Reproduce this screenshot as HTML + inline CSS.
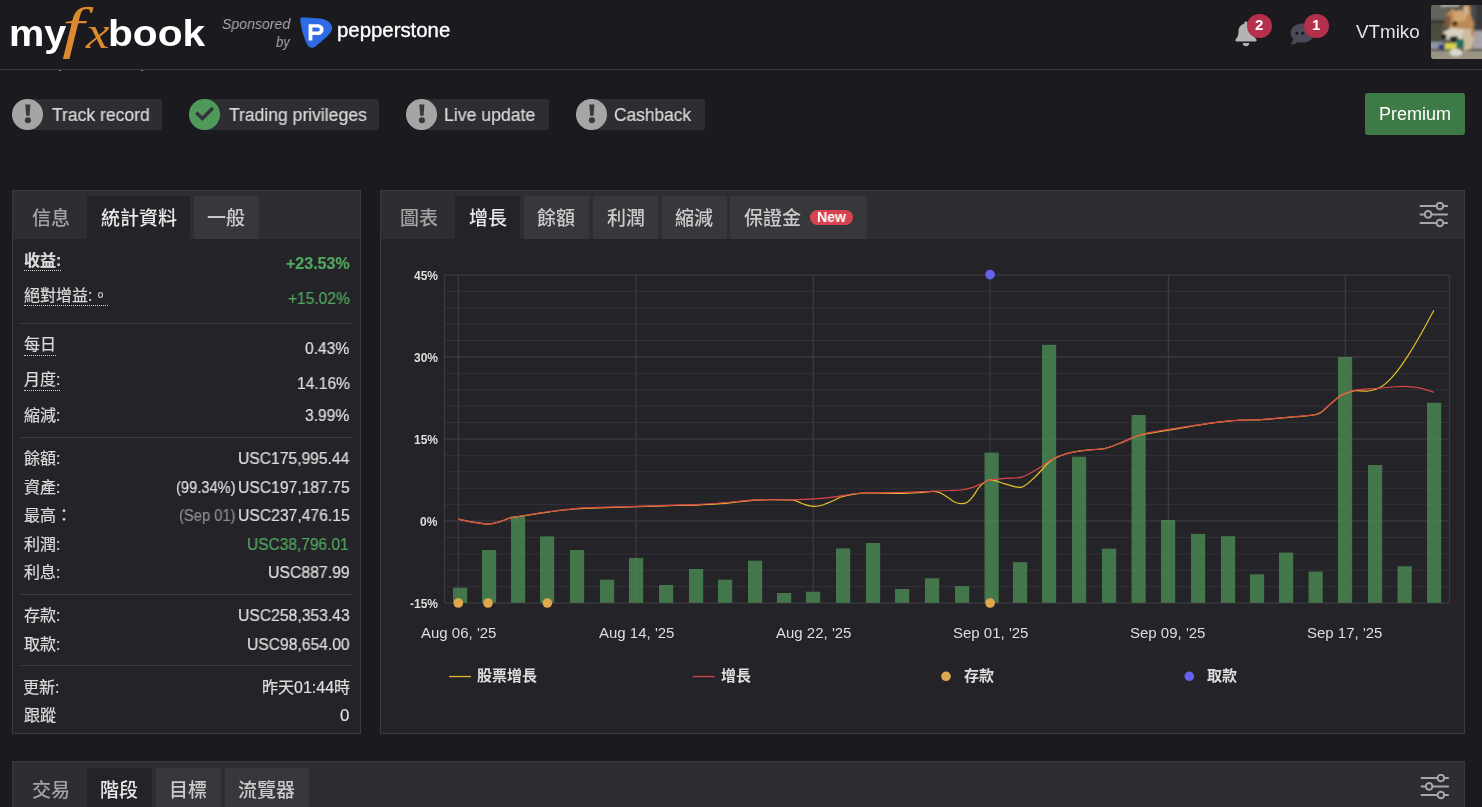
<!DOCTYPE html>
<html lang="zh-Hant"><head><meta charset="utf-8"><title>Myfxbook</title>
<style>
*{box-sizing:border-box;margin:0;padding:0}
html,body{width:1482px;height:807px;overflow:hidden;background:#1b1a1f}
body{position:relative;font-family:"Liberation Sans","Noto Sans CJK TC",sans-serif;color:#d6d6d6}
.abs,.t,.chip,.panel,.tab,.hd,.sep{position:absolute}
.t{white-space:nowrap;transform-origin:0 50%;will-change:transform}
.stats .t,.status-chips .t{-webkit-text-stroke:0.22px currentColor}
.serif{font-family:"Liberation Serif","Noto Serif CJK SC",serif}
.u::after{content:"";position:absolute;left:0;right:0;top:var(--u);border-bottom:1px dotted #cfcfcf}
header{position:absolute;left:0;top:0;width:1482px;height:70px;border-bottom:1.5px solid #3a3a46;background:#1b1a1f}
.chip{top:99px;height:31px;background:#2e2d32;border-radius:16px 3px 3px 16px}
.chip svg{display:block}
.panel{background:#242328;border:1px solid #3a393f}
.hd{left:0;top:0;right:0;height:48px;background:#2e2d32}
.tab{top:5px;height:43px;background:#38373c}
.tab.on{background:#242328}
.sep{left:20px;width:333px;height:1px;background:#3d3c42}
.chart{position:absolute;left:0;top:0}
</style></head><body>
<header></header>
<div class="abs" style="left:59px;top:70px;width:2px;height:1px;background:#8c8c90"></div><div class="abs" style="left:141px;top:70px;width:2px;height:1px;background:#8c8c90"></div>
<svg class="abs" style="left:298px;top:16px" width="36" height="33" viewBox="0 0 36 33"><path d="M2.2 3.6C2 2.2 3 1.2 4.4 1.3L22 2.6c7.6.6 12.6 5.6 12.1 9.8-.3 2.6-2.2 5.6-5.6 8.6l-11 9.6c-2.6 2.2-6.6 1.4-8.2-1.8C5.6 21.600 3 11.600 2.200 3.600z" fill="#2e6be4"/><path d="M10.6 8.2h9.600a5.400 5.400 0 0 1 0 10.800h-5.800v5.400h-3.800z M14.400 11.600v4h5.400a2 2 0 0 0 0-4z" fill="#fff" fill-rule="evenodd"/></svg>
<svg class="abs" style="left:1234px;top:20px" width="24" height="27" viewBox="0 0 24 27"><path d="M12 1.400c1 0 1.700.7 1.700 1.700v.6c3.600.8 5.800 3.800 5.800 7.600 0 4.400 1.200 6.400 2.800 8 .8.800.3 2.200-.9 2.200H2.600c-1.200 0-1.700-1.400-.9-2.200 1.600-1.600 2.800-3.600 2.800-8 0-3.800 2.200-6.800 5.800-7.600v-.6c0-1 .7-1.700 1.700-1.700z" fill="#b4b4b4"/><path d="M8.800 23h6.400a3.200 3.200 0 0 1-6.400 0z" fill="#b4b4b4"/></svg>
<svg class="abs" style="left:1289px;top:22px" width="28" height="25" viewBox="0 0 28 25"><path d="M13.4 1.600C6.800 1.600 1.700 5.700 1.700 10.900c0 2.300 1 4.400 2.700 6-.500 2-1.500 3.800-2.400 4.900-.300.400 0 .900.500.800 2.600-.300 4.900-1.400 6.500-2.600 1.400.400 2.900.600 4.400.600 6.600 0 11.700-4.300 11.700-9.700S20 1.600 13.400 1.600z" fill="#4a4a59"/><g fill="#1b1a1f"><circle cx="7.900" cy="11.300" r="1.500"/><circle cx="13.700" cy="11.300" r="1.500"/><circle cx="19.500" cy="11.300" r="1.500"/></g></svg>
<div class="abs" style="left:1247.4px;top:13.800px;width:24.400px;height:24.400px;border-radius:50%;background:#b4304c"></div>
<div class="abs" style="left:1304.2px;top:13.800px;width:24.400px;height:24.400px;border-radius:50%;background:#b4304c"></div>
<svg class="abs" style="left:1431px;top:5px" width="51" height="54" viewBox="0 0 51 54"><defs><clipPath id="av"><rect x="0" y="0" width="56" height="54" rx="3"/></clipPath><filter id="bl" x="-20%" y="-20%" width="140%" height="140%"><feGaussianBlur stdDeviation="1.300"/></filter></defs><g clip-path="url(#av)"><rect width="51" height="54" fill="#5a574e"/><g filter="url(#bl)"><rect x="-2" y="-2" width="18" height="18" fill="#66645d"/><rect x="10" y="-2" width="18" height="4" fill="#aaa7a3"/><rect x="-2" y="15" width="16" height="3" fill="#35352e"/><rect x="-2" y="18" width="13" height="20" fill="#4d4c3f"/><rect x="44" y="-2" width="9" height="26" fill="#38383b"/><rect x="40" y="-2" width="5" height="24" fill="#4c4b4b"/><rect x="42" y="26" width="11" height="18" fill="#a5a3a7"/><rect x="-2" y="46" width="56" height="10" fill="#9a9482"/><rect x="-2" y="37" width="14" height="7" fill="#8f95a9"/><path d="M16 9l5-6 4 4 7-3 2-5 5 2 1 10 3 8-2 8-6 4-14-4-6-8z" fill="#bd8a57"/><path d="M22 6l8-1 6 5-2 6-10 1z" fill="#d3a573"/><path d="M32.500 1l4 0 1.500 8-4 1z" fill="#d2b594"/><path d="M12 27l8-4 14 1 4 4-6 6-16 1z" fill="#d9d2c3"/><path d="M33 24l8 0 2 8-2 12-8 2-3-10z" fill="#cdbb9b"/><path d="M40 22l3 2 0 8-3-2z" fill="#c08a5a"/><path d="M15 12l4-2 1 8-3 6-3-4z" fill="#7d5a3a"/><path d="M21 17l5-1 1 4-5 1z" fill="#5a3d28"/><circle cx="23.700" cy="18.900" r="1.900" fill="#2a201b"/><circle cx="13" cy="31.500" r="2.600" fill="#171515"/><path d="M18 32l8-1 2 5-8 1z" fill="#1b2626"/><rect x="25" y="34.500" width="8" height="8.500" fill="#1f6f64"/><rect x="13.500" y="38" width="12" height="6.500" fill="#d9d14e"/><rect x="7.500" y="39.500" width="6" height="5" fill="#2b3c80"/><ellipse cx="25" cy="47.500" rx="6.500" ry="3.800" fill="#d9d8d0"/></g></g></svg>
<div class="abs" style="left:1365px;top:93px;width:100px;height:42px;border-radius:3px;background:#3d7a45"></div>
<div class="chip" style="left:12px;width:150px"><svg width="31" height="31" viewBox="0 0 31 31"><circle cx="15.5" cy="15.5" r="15.55" fill="#a5a5a5"/><path d="M13.25 5.4h5.15l-.85 11.4h-3.3z" fill="#38373d"/><circle cx="15.9" cy="21.2" r="3.05" fill="#38373d"/></svg></div>
<div class="chip" style="left:189px;width:190px"><svg width="31" height="31" viewBox="0 0 31 31"><circle cx="15.5" cy="15.5" r="15.55" fill="#4f9a5b"/><path d="M7.3 13.8L13.4 19.6L23.8 9.1" fill="none" stroke="#35343a" stroke-width="3.5"/></svg></div>
<div class="chip" style="left:406px;width:143px"><svg width="31" height="31" viewBox="0 0 31 31"><circle cx="15.5" cy="15.5" r="15.55" fill="#a5a5a5"/><path d="M13.25 5.4h5.15l-.85 11.4h-3.3z" fill="#38373d"/><circle cx="15.9" cy="21.2" r="3.05" fill="#38373d"/></svg></div>
<div class="chip" style="left:576px;width:129px"><svg width="31" height="31" viewBox="0 0 31 31"><circle cx="15.5" cy="15.5" r="15.55" fill="#a5a5a5"/><path d="M13.25 5.4h5.15l-.85 11.4h-3.3z" fill="#38373d"/><circle cx="15.9" cy="21.2" r="3.05" fill="#38373d"/></svg></div>
<section class="panel" style="left:12px;top:190px;width:349px;height:544px"><div class="hd"><div class="tab on" style="left:74px;width:103px"></div><div class="tab" style="left:181px;width:65px"></div></div></section>
<div class="sep" style="top:323px"></div>
<div class="sep" style="top:437px"></div>
<div class="sep" style="top:594px"></div>
<div class="sep" style="top:665px"></div>
<section class="panel" style="left:380px;top:190px;width:1085px;height:544px"><div class="hd"><div class="tab on" style="left:74px;width:65px"></div><div class="tab" style="left:143px;width:65px"></div><div class="tab" style="left:212px;width:65px"></div><div class="tab" style="left:281px;width:64.500px"></div><div class="tab" style="left:349px;width:137px"></div></div></section>
<div class="abs" style="left:809.800px;top:209.800px;width:43.500px;height:15px;border-radius:8px;background:#d8434f"></div>
<svg class="abs" style="left:1419px;top:201.9px" width="30" height="26" viewBox="0 0 30 26"><g stroke="#a8a8a8" stroke-width="2" fill="none"><path d="M0.8 4H17.5M24.3 4H28.8M0.8 12.4H5.7M12.5 12.4H28.8M0.8 21H17.5M24.3 21H28.8"/><circle cx="20.9" cy="4" r="3.3"/><circle cx="9.1" cy="12.4" r="3.3"/><circle cx="20.9" cy="21" r="3.3"/></g></svg>
<svg class="chart" width="1482" height="807" viewBox="0 0 1482 807">
<rect x="444.5" y="274.30" width="1005.0" height="1.3" fill="#3b3a40"/>
<rect x="444.5" y="290.80" width="1005.0" height="1.1" fill="#323137"/>
<rect x="444.5" y="307.21" width="1005.0" height="1.1" fill="#323137"/>
<rect x="444.5" y="323.61" width="1005.0" height="1.1" fill="#323137"/>
<rect x="444.5" y="340.02" width="1005.0" height="1.1" fill="#323137"/>
<rect x="444.5" y="356.32" width="1005.0" height="1.3" fill="#3b3a40"/>
<rect x="444.5" y="372.83" width="1005.0" height="1.1" fill="#323137"/>
<rect x="444.5" y="389.23" width="1005.0" height="1.1" fill="#323137"/>
<rect x="444.5" y="405.64" width="1005.0" height="1.1" fill="#323137"/>
<rect x="444.5" y="422.04" width="1005.0" height="1.1" fill="#323137"/>
<rect x="444.5" y="438.35" width="1005.0" height="1.3" fill="#3b3a40"/>
<rect x="444.5" y="454.85" width="1005.0" height="1.1" fill="#323137"/>
<rect x="444.5" y="471.26" width="1005.0" height="1.1" fill="#323137"/>
<rect x="444.5" y="487.66" width="1005.0" height="1.1" fill="#323137"/>
<rect x="444.5" y="504.07" width="1005.0" height="1.1" fill="#323137"/>
<rect x="444.5" y="520.38" width="1005.0" height="1.3" fill="#3b3a40"/>
<rect x="444.5" y="536.88" width="1005.0" height="1.1" fill="#323137"/>
<rect x="444.5" y="553.28" width="1005.0" height="1.1" fill="#323137"/>
<rect x="444.5" y="569.69" width="1005.0" height="1.1" fill="#323137"/>
<rect x="444.5" y="586.10" width="1005.0" height="1.1" fill="#323137"/>
<rect x="444.5" y="602.40" width="1005.0" height="1.3" fill="#3b3a40"/>
<rect x="443.85" y="274.9" width="1.3" height="328.1" fill="#3b3a40"/>
<rect x="457.65" y="274.9" width="1.3" height="328.1" fill="#3b3a40"/>
<rect x="635.55" y="274.9" width="1.3" height="328.1" fill="#3b3a40"/>
<rect x="812.65" y="274.9" width="1.3" height="328.1" fill="#3b3a40"/>
<rect x="989.45" y="274.9" width="1.3" height="328.1" fill="#3b3a40"/>
<rect x="1167.75" y="274.9" width="1.3" height="328.1" fill="#3b3a40"/>
<rect x="1344.65" y="274.9" width="1.3" height="328.1" fill="#3b3a40"/>
<rect x="1448.85" y="274.9" width="1.3" height="328.1" fill="#3b3a40"/>
<g fill="#4a8a53" fill-opacity="0.82">
<rect x="453.0" y="587.7" width="14.2" height="15.0"/>
<rect x="482.0" y="550.0" width="14.2" height="52.8"/>
<rect x="511.0" y="516.1" width="14.2" height="86.6"/>
<rect x="540.0" y="536.4" width="14.2" height="66.4"/>
<rect x="570.0" y="550.0" width="14.2" height="52.8"/>
<rect x="600.0" y="579.7" width="14.2" height="23.0"/>
<rect x="629.0" y="558.0" width="14.2" height="44.8"/>
<rect x="659.0" y="585.0" width="14.2" height="17.8"/>
<rect x="689.0" y="569.0" width="14.2" height="33.8"/>
<rect x="718.0" y="579.7" width="14.2" height="23.0"/>
<rect x="748.0" y="560.7" width="14.2" height="42.0"/>
<rect x="777.0" y="593.0" width="14.2" height="9.8"/>
<rect x="806.0" y="591.7" width="14.2" height="11.0"/>
<rect x="836.0" y="548.4" width="14.2" height="54.4"/>
<rect x="866.0" y="543.0" width="14.2" height="59.8"/>
<rect x="895.0" y="589.0" width="14.2" height="13.8"/>
<rect x="925.0" y="578.3" width="14.2" height="24.5"/>
<rect x="955.0" y="586.1" width="14.2" height="16.6"/>
<rect x="984.5" y="452.6" width="14.2" height="150.1"/>
<rect x="1013.0" y="562.2" width="14.2" height="40.5"/>
<rect x="1042.0" y="344.8" width="14.2" height="257.9"/>
<rect x="1072.0" y="456.7" width="14.2" height="146.1"/>
<rect x="1102.0" y="548.6" width="14.2" height="54.1"/>
<rect x="1131.5" y="415.0" width="14.2" height="187.8"/>
<rect x="1161.0" y="520.0" width="14.2" height="82.8"/>
<rect x="1191.0" y="533.9" width="14.2" height="68.9"/>
<rect x="1221.0" y="536.2" width="14.2" height="66.5"/>
<rect x="1250.0" y="574.3" width="14.2" height="28.5"/>
<rect x="1279.0" y="552.6" width="14.2" height="50.1"/>
<rect x="1308.5" y="571.6" width="14.2" height="31.1"/>
<rect x="1338.0" y="357.0" width="14.2" height="245.8"/>
<rect x="1368.0" y="465.0" width="14.2" height="137.8"/>
<rect x="1397.5" y="566.3" width="14.2" height="36.5"/>
<rect x="1427.0" y="402.8" width="14.2" height="199.9"/>
</g>
<path d="M458.3 519.2 C460.8 519.7 468.1 521.4 473.0 522.2 C477.9 523.0 483.5 524.2 488.0 524.1 C492.5 524.0 496.3 522.6 500.0 521.6 C503.7 520.6 505.0 519.3 510.0 518.2 C515.0 517.1 523.3 515.9 530.0 514.8 C536.7 513.7 542.5 512.8 550.0 511.8 C557.5 510.8 565.7 509.7 575.0 509.0 C584.3 508.3 595.8 508.0 606.0 507.6 C616.2 507.2 626.2 506.9 636.0 506.6 C645.8 506.3 654.3 506.1 665.0 505.8 C675.7 505.5 690.0 505.2 700.0 504.8 C710.0 504.4 715.7 504.2 725.0 503.4 C734.3 502.6 745.1 500.7 755.8 500.1 C766.5 499.5 782.1 499.8 789.0 500.0 C795.9 500.2 794.3 500.6 797.0 501.4 C799.7 502.2 802.2 503.8 805.0 504.6 C807.8 505.4 811.0 506.2 813.8 506.3 C816.6 506.4 819.0 506.1 822.0 505.2 C825.0 504.3 828.5 502.7 832.0 501.2 C835.5 499.7 838.8 497.6 842.8 496.4 C846.8 495.2 851.5 494.4 856.0 493.8 C860.5 493.2 862.1 493.1 869.6 493.0 C877.1 492.9 892.4 493.5 900.8 493.4 C909.2 493.3 914.8 492.9 920.0 492.6 C925.2 492.3 928.7 491.4 932.0 491.4 C935.3 491.4 937.3 491.8 940.0 492.8 C942.7 493.8 945.5 496.0 948.0 497.6 C950.5 499.2 952.8 501.2 955.0 502.2 C957.2 503.2 959.0 503.6 961.0 503.6 C963.0 503.6 965.0 503.6 967.0 502.4 C969.0 501.2 970.8 499.1 973.0 496.4 C975.2 493.7 977.2 489.1 980.0 486.4 C982.8 483.6 985.8 480.3 990.0 479.9 C994.2 479.5 999.8 482.6 1005.0 483.8 C1010.2 485.0 1016.3 488.3 1021.3 487.2 C1026.3 486.1 1030.2 481.3 1035.0 477.0 C1039.8 472.7 1045.5 464.9 1050.0 461.3 C1054.5 457.7 1057.9 456.8 1062.0 455.2 C1066.1 453.6 1069.8 452.8 1074.5 451.9 C1079.2 451.0 1085.0 450.4 1090.0 449.9 C1095.0 449.3 1099.5 449.7 1104.5 448.6 C1109.5 447.5 1115.0 445.1 1120.0 443.2 C1125.0 441.3 1130.3 438.6 1134.5 437.0 C1138.7 435.4 1139.7 435.0 1145.4 433.9 C1151.1 432.8 1159.5 431.7 1168.6 430.2 C1177.7 428.7 1189.3 426.4 1200.0 424.8 C1210.7 423.2 1222.4 421.6 1232.6 420.7 C1242.8 419.8 1251.6 420.2 1261.2 419.6 C1270.8 419.0 1282.2 417.9 1290.0 417.2 C1297.8 416.5 1303.1 416.2 1308.0 415.6 C1312.9 415.0 1315.5 415.3 1319.2 413.4 C1322.9 411.5 1327.3 406.7 1330.4 404.1 C1333.5 401.5 1335.5 399.4 1338.0 397.6 C1340.5 395.8 1342.5 394.6 1345.3 393.4 C1348.1 392.2 1351.2 391.0 1355.0 390.6 C1358.8 390.2 1363.8 391.7 1368.3 391.0 C1372.8 390.3 1377.2 389.4 1381.7 386.5 C1386.2 383.6 1390.5 379.1 1395.0 373.8 C1399.5 368.5 1404.0 361.7 1408.5 354.8 C1413.0 347.9 1417.6 339.9 1421.8 332.5 C1426.0 325.1 1431.9 313.9 1433.9 310.2" fill="none" stroke="#e6c02a" stroke-width="1.2"/>
<path d="M458.3 519.2 C460.8 519.7 468.1 521.4 473.0 522.2 C477.9 523.0 483.5 524.2 488.0 524.1 C492.5 524.0 496.3 522.6 500.0 521.6 C503.7 520.6 505.0 519.4 510.0 518.2 C515.0 517.0 523.3 515.7 530.0 514.6 C536.7 513.5 542.5 512.5 550.0 511.5 C557.5 510.5 565.7 509.3 575.0 508.6 C584.3 507.9 595.8 507.6 606.0 507.2 C616.2 506.8 626.2 506.7 636.0 506.4 C645.8 506.1 654.3 505.8 665.0 505.4 C675.7 505.0 690.0 504.8 700.0 504.3 C710.0 503.8 715.7 503.3 725.0 502.6 C734.3 501.9 745.1 500.4 755.8 499.9 C766.5 499.4 779.3 500.0 789.0 499.8 C798.7 499.6 806.1 499.4 813.8 498.9 C821.5 498.4 828.0 497.7 835.0 496.8 C842.0 495.9 850.2 494.2 856.0 493.5 C861.8 492.8 862.1 492.8 869.6 492.6 C877.1 492.4 890.4 492.7 900.8 492.5 C911.2 492.3 923.8 491.6 932.0 491.3 C940.2 491.0 945.2 490.7 950.0 490.5 C954.8 490.3 957.3 490.5 961.0 490.0 C964.7 489.5 968.8 488.5 972.0 487.6 C975.2 486.7 977.0 485.7 980.0 484.4 C983.0 483.1 985.8 481.0 990.0 480.0 C994.2 479.0 999.8 478.9 1005.0 478.4 C1010.2 477.9 1016.3 478.5 1021.3 477.2 C1026.3 475.9 1030.2 473.3 1035.0 470.5 C1039.8 467.7 1045.5 463.1 1050.0 460.5 C1054.5 457.9 1057.9 456.4 1062.0 455.0 C1066.1 453.6 1069.8 452.7 1074.5 451.8 C1079.2 450.9 1085.0 450.4 1090.0 449.8 C1095.0 449.2 1099.5 449.6 1104.5 448.5 C1109.5 447.4 1115.0 444.9 1120.0 443.0 C1125.0 441.1 1130.3 438.4 1134.5 436.8 C1138.7 435.2 1139.7 434.7 1145.4 433.5 C1151.1 432.3 1159.5 430.9 1168.6 429.4 C1177.7 427.9 1189.3 426.1 1200.0 424.6 C1210.7 423.1 1222.4 421.5 1232.6 420.6 C1242.8 419.8 1251.6 420.1 1261.2 419.5 C1270.8 418.9 1282.2 417.7 1290.0 417.0 C1297.8 416.3 1303.1 416.1 1308.0 415.5 C1312.9 414.9 1315.5 415.2 1319.2 413.3 C1322.9 411.4 1327.3 406.6 1330.4 404.0 C1333.5 401.4 1335.5 399.3 1338.0 397.5 C1340.5 395.7 1342.5 394.4 1345.3 393.2 C1348.1 392.0 1350.0 391.0 1355.0 390.2 C1360.0 389.4 1368.8 389.0 1375.0 388.5 C1381.2 388.0 1387.2 387.4 1392.0 387.0 C1396.8 386.6 1399.4 386.2 1404.0 386.3 C1408.6 386.4 1414.6 386.8 1419.6 387.8 C1424.6 388.8 1431.5 391.6 1433.9 392.3" fill="none" stroke="#d9474a" stroke-width="1.2"/>
<circle cx="458.3" cy="603" r="4.8" fill="#e0a84e"/>
<circle cx="488.0" cy="603" r="4.8" fill="#e0a84e"/>
<circle cx="547.3" cy="603" r="4.8" fill="#e0a84e"/>
<circle cx="990.1" cy="603" r="4.8" fill="#e0a84e"/>
<circle cx="990.1" cy="274.6" r="4.8" fill="#6462ee"/>
<rect x="449" y="675.9" width="22" height="1.3" fill="#dbb62c"/>
<rect x="692.6" y="675.9" width="22" height="1.3" fill="#cf4548"/>
<circle cx="946" cy="676.3" r="4.8" fill="#e0a84e"/>
<circle cx="1189.3" cy="676.3" r="4.8" fill="#6462ee"/>
</svg>
<section class="panel" style="left:12px;top:761px;width:1453px;height:80px"><div class="hd" style="height:60px"><div class="tab on" style="left:74px;top:6px;width:65px;height:60px"></div><div class="tab" style="left:143px;top:6px;width:65px;height:60px"></div><div class="tab" style="left:212px;top:6px;width:84px;height:60px"></div></div></section>
<svg class="abs" style="left:1419.5px;top:774.1px" width="30" height="26" viewBox="0 0 30 26"><g stroke="#a8a8a8" stroke-width="2" fill="none"><path d="M0.8 4H17.5M24.3 4H28.8M0.8 12.4H5.7M12.5 12.4H28.8M0.8 21H17.5M24.3 21H28.8"/><circle cx="20.9" cy="4" r="3.3"/><circle cx="9.1" cy="12.4" r="3.3"/><circle cx="20.9" cy="21" r="3.3"/></g></svg>
<div class="grp header">
<div class="t" style="left:9.20px;top:7.5px;font-size:37px;line-height:52px;color:#fff;font-weight:bold;transform:scaleX(1.0725);">my</div>
<div class="t serif" style="left:61.55px;top:-11.0px;font-size:56px;line-height:78px;color:#dd8a2e;font-style:italic;transform:scaleX(1.4297);">f</div>
<div class="t serif" style="left:86.35px;top:-1.0px;font-size:47px;line-height:66px;color:#dd8a2e;font-style:italic;transform:scaleX(1.1203);">x</div>
<div class="t" style="left:107.94px;top:7.5px;font-size:37px;line-height:52px;color:#fff;font-weight:bold;transform:scaleX(1.0988);">book</div>
<div class="t" style="left:221.99px;top:12.8px;font-size:15px;line-height:21px;color:#a9a9a9;font-style:italic;transform:scaleX(0.9413);">Sponsored</div>
<div class="t" style="left:276.21px;top:30.8px;font-size:15px;line-height:21px;color:#a9a9a9;font-style:italic;transform:scaleX(0.8694);">by</div>
<div class="t" style="left:336.68px;top:16.3px;font-size:20px;line-height:28px;color:#fff;-webkit-text-stroke:0.35px #fff;transform:scaleX(1.0185);">pepperstone</div>
<div class="t" style="left:1255.00px;top:14.3px;font-size:15px;line-height:21px;color:#fff;font-weight:bold;">2</div>
<div class="t" style="left:1311.50px;top:14.3px;font-size:15px;line-height:21px;color:#fff;font-weight:bold;">1</div>
<div class="t" style="left:1356.00px;top:20.4px;font-size:18px;line-height:25px;color:#e4e4e4;transform:scaleX(1.0442);">VTmiko</div>
<div class="t" style="left:1378.83px;top:102.1px;font-size:18px;line-height:25px;color:#fff;">Premium</div>
</div>
<div class="grp status-chips">
<div class="t" style="left:51.68px;top:102.7px;font-size:18px;line-height:25px;color:#d9d9d9;transform:scaleX(0.9747);">Track record</div>
<div class="t" style="left:228.68px;top:102.7px;font-size:18px;line-height:25px;color:#d9d9d9;transform:scaleX(0.9741);">Trading privileges</div>
<div class="t" style="left:444.39px;top:102.7px;font-size:18px;line-height:25px;color:#d9d9d9;transform:scaleX(0.9813);">Live update</div>
<div class="t" style="left:614.34px;top:102.7px;font-size:18px;line-height:25px;color:#d9d9d9;transform:scaleX(0.9633);">Cashback</div>
</div>
<div class="grp tabs">
<div class="t" style="left:31.77px;top:204.5px;font-size:19px;line-height:27px;color:#a3a3a3;font-weight:500;">信息</div>
<div class="t" style="left:100.82px;top:204.5px;font-size:19px;line-height:27px;color:#e8e8e8;font-weight:500;">統計資料</div>
<div class="t" style="left:207.45px;top:204.5px;font-size:19px;line-height:27px;color:#cbcbcb;font-weight:500;">一般</div>
<div class="t" style="left:399.67px;top:204.5px;font-size:19px;line-height:27px;color:#a3a3a3;font-weight:500;">圖表</div>
<div class="t" style="left:468.55px;top:204.5px;font-size:19px;line-height:27px;color:#e8e8e8;font-weight:500;">增長</div>
<div class="t" style="left:537.30px;top:204.5px;font-size:19px;line-height:27px;color:#cbcbcb;font-weight:500;">餘額</div>
<div class="t" style="left:606.55px;top:204.5px;font-size:19px;line-height:27px;color:#cbcbcb;font-weight:500;">利潤</div>
<div class="t" style="left:675.05px;top:204.5px;font-size:19px;line-height:27px;color:#cbcbcb;font-weight:500;">縮減</div>
<div class="t" style="left:744.10px;top:204.5px;font-size:19px;line-height:27px;color:#cbcbcb;font-weight:500;">保證金</div>
<div class="t" style="left:816.63px;top:207.3px;font-size:14.5px;line-height:20px;color:#fff;font-weight:bold;transform:scaleX(0.9698);">New</div>
<div class="t" style="left:31.93px;top:777.2px;font-size:19px;line-height:27px;color:#a3a3a3;font-weight:500;">交易</div>
<div class="t" style="left:100.42px;top:777.2px;font-size:19px;line-height:27px;color:#e8e8e8;font-weight:500;">階段</div>
<div class="t" style="left:169.10px;top:777.2px;font-size:19px;line-height:27px;color:#cbcbcb;font-weight:500;">目標</div>
<div class="t" style="left:238.40px;top:777.2px;font-size:19px;line-height:27px;color:#cbcbcb;font-weight:500;">流覽器</div>
</div>
<div class="grp stats">
<div class="t u" style="left:23.63px;top:250px;--u:20px;font-size:16px;line-height:22px;color:#dadada;font-weight:bold;">收益:</div>
<div class="t u" style="left:23.63px;top:285px;--u:20px;font-size:16px;line-height:22px;color:#dadada;">絕對增益:。</div>
<div class="t u" style="left:23.63px;top:334px;--u:21px;font-size:16px;line-height:22px;color:#dadada;">每日</div>
<div class="t u" style="left:23.63px;top:369px;--u:21px;font-size:16px;line-height:22px;color:#dadada;">月度:</div>
<div class="t" style="left:23.97px;top:404.9px;font-size:16px;line-height:22px;color:#dadada;">縮減:</div>
<div class="t" style="left:23.63px;top:447.9px;font-size:16px;line-height:22px;color:#dadada;">餘額:</div>
<div class="t" style="left:23.63px;top:476.6px;font-size:16px;line-height:22px;color:#dadada;">資產:</div>
<div class="t" style="left:23.63px;top:505.0px;font-size:16px;line-height:22px;color:#dadada;">最高：</div>
<div class="t" style="left:23.97px;top:533.6px;font-size:16px;line-height:22px;color:#dadada;">利潤:</div>
<div class="t" style="left:23.97px;top:562.0px;font-size:16px;line-height:22px;color:#dadada;">利息:</div>
<div class="t" style="left:23.63px;top:604.9px;font-size:16px;line-height:22px;color:#dadada;">存款:</div>
<div class="t" style="left:23.97px;top:633.6px;font-size:16px;line-height:22px;color:#dadada;">取款:</div>
<div class="t" style="left:23.30px;top:676.6px;font-size:16px;line-height:22px;color:#dadada;">更新:</div>
<div class="t" style="left:23.63px;top:704.8px;font-size:16px;line-height:22px;color:#dadada;">跟蹤</div>
<div class="t" style="left:286.00px;top:253.1px;font-size:16px;line-height:22px;color:#50a55f;font-weight:bold;">+23.53%</div>
<div class="t" style="left:287.85px;top:288.2px;font-size:16px;line-height:22px;color:#50a55f;transform:scaleX(0.9706);">+15.02%</div>
<div class="t" style="left:305.15px;top:338.0px;font-size:16px;line-height:22px;color:#dedede;transform:scaleX(0.9744);">0.43%</div>
<div class="t" style="left:296.62px;top:373.1px;font-size:16px;line-height:22px;color:#dedede;transform:scaleX(0.9759);">14.16%</div>
<div class="t" style="left:305.15px;top:405.4px;font-size:16px;line-height:22px;color:#dedede;transform:scaleX(0.9744);">3.99%</div>
<div class="t" style="left:237.82px;top:448.3px;font-size:16px;line-height:22px;color:#dedede;transform:scaleX(0.9781);">USC175,995.44</div>
<div class="t" style="left:237.82px;top:477.0px;font-size:16px;line-height:22px;color:#dedede;transform:scaleX(0.9810);">USC197,187.75</div>
<div class="t" style="left:175.58px;top:477.0px;font-size:16px;line-height:22px;color:#dedede;transform:scaleX(0.9190);">(99.34%)</div>
<div class="t" style="left:237.82px;top:505.4px;font-size:16px;line-height:22px;color:#dedede;transform:scaleX(0.9810);">USC237,476.15</div>
<div class="t" style="left:178.88px;top:505.4px;font-size:16px;line-height:22px;color:#8d8d8d;transform:scaleX(0.9202);">(Sep 01)</div>
<div class="t" style="left:247.23px;top:534.0px;font-size:16px;line-height:22px;color:#50a55f;transform:scaleX(0.9677);">USC38,796.01</div>
<div class="t" style="left:268.01px;top:562.3px;font-size:16px;line-height:22px;color:#dedede;transform:scaleX(0.9877);">USC887.99</div>
<div class="t" style="left:237.82px;top:605.2px;font-size:16px;line-height:22px;color:#dedede;transform:scaleX(0.9810);">USC258,353.43</div>
<div class="t" style="left:247.02px;top:633.9px;font-size:16px;line-height:22px;color:#dedede;transform:scaleX(0.9774);">USC98,654.00</div>
<div class="t" style="left:261.67px;top:677.0px;font-size:16px;line-height:22px;color:#dedede;">昨天01:44時</div>
<div class="t" style="left:340.20px;top:705.2px;font-size:16px;line-height:22px;color:#dedede;transform:scaleX(1.0565);">0</div>
</div>
<div class="grp chart-labels">
<div class="t" style="left:413.53px;top:267.5px;font-size:12px;line-height:17px;color:#dedede;font-weight:bold;">45%</div>
<div class="t" style="left:413.53px;top:349.5px;font-size:12px;line-height:17px;color:#dedede;font-weight:bold;">30%</div>
<div class="t" style="left:413.53px;top:431.5px;font-size:12px;line-height:17px;color:#dedede;font-weight:bold;">15%</div>
<div class="t" style="left:420.20px;top:513.5px;font-size:12px;line-height:17px;color:#dedede;font-weight:bold;">0%</div>
<div class="t" style="left:409.53px;top:595.5px;font-size:12px;line-height:17px;color:#dedede;font-weight:bold;">-15%</div>
<div class="t" style="left:421.30px;top:622.3px;font-size:15px;line-height:21px;color:#dedede;">Aug 06, '25</div>
<div class="t" style="left:598.60px;top:622.3px;font-size:15px;line-height:21px;color:#dedede;">Aug 14, '25</div>
<div class="t" style="left:775.80px;top:622.3px;font-size:15px;line-height:21px;color:#dedede;">Aug 22, '25</div>
<div class="t" style="left:952.97px;top:622.3px;font-size:15px;line-height:21px;color:#dedede;">Sep 01, '25</div>
<div class="t" style="left:1130.17px;top:622.3px;font-size:15px;line-height:21px;color:#dedede;">Sep 09, '25</div>
<div class="t" style="left:1307.47px;top:622.3px;font-size:15px;line-height:21px;color:#dedede;">Sep 17, '25</div>
<div class="t" style="left:477.35px;top:665.3px;font-size:15px;line-height:21px;color:#dedede;font-weight:bold;">股票增長</div>
<div class="t" style="left:720.90px;top:665.3px;font-size:15px;line-height:21px;color:#dedede;font-weight:bold;">增長</div>
<div class="t" style="left:964.10px;top:665.3px;font-size:15px;line-height:21px;color:#dedede;font-weight:bold;">存款</div>
<div class="t" style="left:1207.00px;top:665.3px;font-size:15px;line-height:21px;color:#dedede;font-weight:bold;">取款</div>
</div>
</body></html>
